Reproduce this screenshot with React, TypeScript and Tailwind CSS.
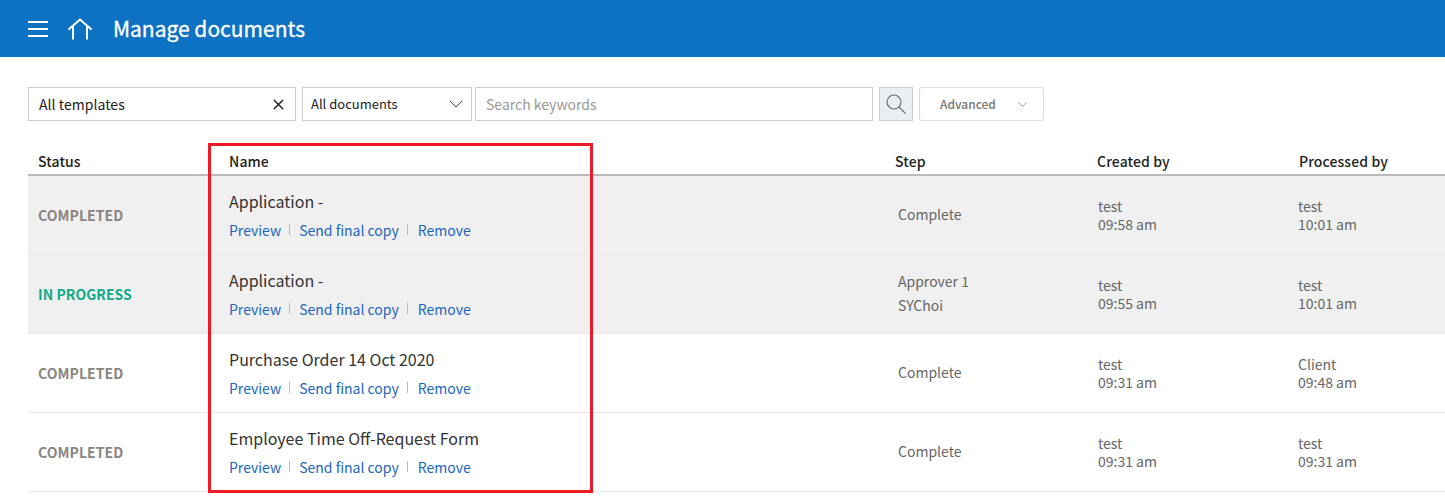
import React from 'react'
import { X, ChevronDown } from 'lucide-react'

interface Doc {
  status: string
  name: string
  step: string[]
  created: string
  processedBy: string
  processed: string
  shaded?: boolean
}

const docs: Doc[] = [
  { status: 'COMPLETED', name: 'Application -', step: ['Complete'], created: '09:58 am', processedBy: 'test', processed: '10:01 am', shaded: true },
  { status: 'IN PROGRESS', name: 'Application -', step: ['Approver 1', 'SYChoi'], created: '09:55 am', processedBy: 'test', processed: '10:01 am', shaded: true },
  { status: 'COMPLETED', name: 'Purchase Order 14 Oct 2020', step: ['Complete'], created: '09:31 am', processedBy: 'Client', processed: '09:48 am' },
  { status: 'COMPLETED', name: 'Employee Time Off-Request Form', step: ['Complete'], created: '09:31 am', processedBy: 'test', processed: '09:31 am' },
]

const cols = 'grid grid-cols-[201px_666px_202px_201px_147px]'

export default function App() {
  return (
    <div className="relative h-[496px] w-[1445px] overflow-hidden bg-white font-['Noto_Sans_CJK_KR','Noto_Sans',sans-serif] text-[14px] text-[#333]">
      {/* Header */}
      <header className="flex h-[57px] items-center bg-[#0e72c3] pl-[28px] text-white">
        <svg width="20" height="16" viewBox="0 0 20 16" fill="none" stroke="white" strokeWidth="2">
          <path d="M0 1h20M0 8h20M0 15h20" />
        </svg>
        <svg className="ml-[19px]" width="26" height="22" viewBox="0 0 26 22" fill="none" stroke="white" strokeWidth="2">
          <path d="M1.500 11.500 13 1.500l11.500 10M6 8.500V21.500M20 8.500V21.500" />
        </svg>
        <h1 className="ml-[20px] text-[21px] leading-none [-webkit-text-stroke:0.3px_white]">Manage documents</h1>
      </header>

      {/* Search & Filter */}
      <div className="ml-[28px] mt-[30px] flex h-[34px] items-center">
        <div className="flex h-[34px] w-[268px] items-center justify-between border border-[#ccc] pl-[10px] pr-[8px] text-[14px] text-[#222]">
          <span className="tracking-[0.05px]">All templates</span>
          <X size={17} strokeWidth={2} className="text-[#222]" />
        </div>
        <div className="ml-[6px] flex h-[34px] w-[170px] items-center justify-between border border-[#ccc] pl-[8px] pr-[3px] text-[13px] text-[#222]">
          <span>All documents</span>
          <ChevronDown size={24} strokeWidth={1} className="text-[#444]" />
        </div>
        <div className="ml-[3px] flex h-[34px] w-[398px] items-center border border-[#ccc] pl-[10px] text-[14px] text-[#999]">
          Search keywords
        </div>
        <div className="ml-[6px] flex h-[34px] w-[34px] items-center justify-center border border-[#ccc] bg-[#eceff1]">
          <svg width="20" height="20" viewBox="0 0 20 20" fill="none" stroke="#666" strokeWidth="1.100">
            <circle cx="8" cy="8" r="7" />
            <path d="M13 13l6.500 6.500" />
          </svg>
        </div>
        <div className="ml-[6px] flex h-[34px] w-[125px] items-center rounded-[3px] border border-[#ddd] pl-[20px] text-[12px] font-medium text-[#777]">
          <span>Advanced</span>
          <ChevronDown size={15} strokeWidth={1.2} className="ml-[19px] text-[#777]" />
        </div>
      </div>

      {/* Table */}
      <div className="ml-[28px] mt-[22px] w-[1417px]">
        <div className={`${cols} h-[33px] items-end border-b-2 border-[#bbb] pb-[2px] font-medium tracking-[0.1px] text-[#222]`}>
          <div className="pl-[10px]">Status</div>
          <div>Name</div>
          <div>Step</div>
          <div>Created by</div>
          <div className="pl-[1px]">Processed by</div>
        </div>
        {docs.map((d, i) => (
          <div key={i} className={`${cols} h-[79px] items-center border-b border-[#e8e8e8] ${d.shaded ? 'bg-[#f0f0f0]' : 'bg-white'}`}>
            <div className={`pl-[10px] font-bold tracking-[0.05px] ${d.status === 'IN PROGRESS' ? 'text-[#0fab87]' : 'text-[#8a8580]'}`}>{d.status}</div>
            <div>
              <div className="-mt-[2px] text-[16px] leading-[24px] text-[#333]">{d.name}</div>
              <div className="mt-[7px] flex items-center text-[14px] leading-[20px] text-[#1b66c0]">
                <span>Preview</span>
                <span className="ml-[8px] mr-[9px] h-[11px] w-px bg-[#bbb]" />
                <span>Send final copy</span>
                <span className="ml-[8px] mr-[10px] h-[11px] w-px bg-[#bbb]" />
                <span>Remove</span>
              </div>
            </div>
            <div className="-mt-[2px] pl-[3px] leading-[24px] text-[#666]">
              {d.step.map(s => <div key={s}>{s}</div>)}
            </div>
            <div className="pl-[1px] leading-[18px] text-[#666]">
              <div>test</div>
              <div>{d.created}</div>
            </div>
            <div className="leading-[18px] text-[#666]">
              <div>{d.processedBy}</div>
              <div>{d.processed}</div>
            </div>
          </div>
        ))}
      </div>

      {/* Red highlight drawn over the name column */}
      <div className="absolute left-[208px] top-[143px] h-[350px] w-[385px] border-[3px] border-[#ed1c24]" />
    </div>
  )
}
